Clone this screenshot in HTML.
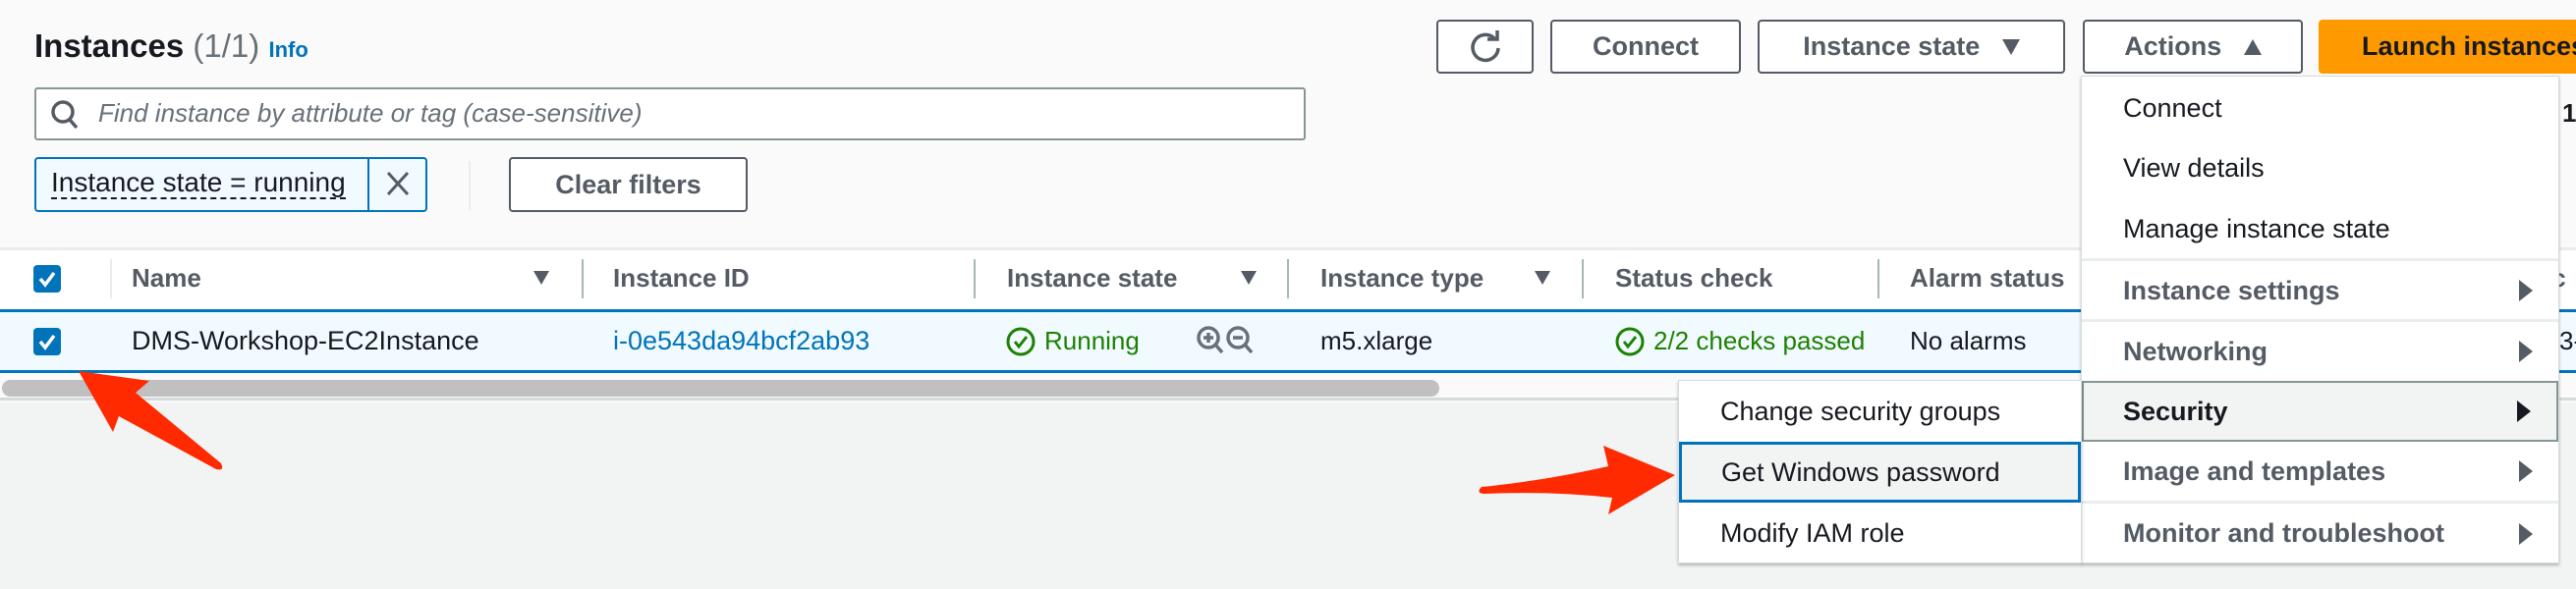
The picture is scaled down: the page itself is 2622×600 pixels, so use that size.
<!DOCTYPE html>
<html><head><meta charset="utf-8"><style>
*{box-sizing:border-box;margin:0;padding:0}
body{width:2622px;height:600px;overflow:hidden;background:#f2f3f3;font-family:"Liberation Sans",sans-serif;position:relative;color:#16191f}
.a{position:absolute}
.btn{position:absolute;top:20px;height:55px;border:2px solid #545b64;border-radius:4px;background:#fff;color:#545b64;font-weight:bold;font-size:27px;display:flex;align-items:center;justify-content:center}
.hd{position:absolute;top:268px;font-weight:bold;font-size:26px;color:#545b64}
.dv{position:absolute;top:264px;width:2px;height:40px;background:#aab7b8}
.sa{position:absolute;top:276px;width:0;height:0;border-left:8px solid transparent;border-right:8px solid transparent;border-top:14px solid #545b64}
.cell{position:absolute;top:332px;font-size:26px}
.mi{position:absolute;left:0;width:100%;font-size:27px;display:flex;align-items:center;padding-left:42px}
.mb{font-weight:bold;color:#545b64}
.tri{position:absolute;right:26px;width:0;height:0;border-top:11px solid transparent;border-bottom:11px solid transparent;border-left:14px solid #545b64}
.sep{position:absolute;left:0;width:100%;height:3px;background:#eaeded}
</style></head><body>
<div class="a" style="left:0;top:0;width:2622px;height:410px;background:#fafafa"></div>
<div class="a" style="left:35px;top:28px;font-size:33px;font-weight:bold;color:#16191f">Instances <span style="font-weight:normal;color:#687078">(1/1)</span> <span style="font-size:22px;color:#0073bb">Info</span></div>
<div class="a" style="left:35px;top:89px;width:1294px;height:54px;border:2px solid #879596;border-radius:3px;background:#fff"></div>
<svg class="a" style="left:50px;top:100px" width="32" height="34" viewBox="0 0 32 34"><circle cx="14" cy="14" r="10" fill="none" stroke="#545b64" stroke-width="3.5"/><line x1="21" y1="22" x2="28" y2="30" stroke="#545b64" stroke-width="3.5"/></svg>
<div class="a" style="left:100px;top:100px;font-size:26px;font-style:italic;color:#687078">Find instance by attribute or tag (case-sensitive)</div>
<div class="a" style="left:35px;top:160px;width:400px;height:56px;border:2px solid #0073bb;border-radius:4px;background:#f1faff"></div>
<div class="a" style="left:374px;top:162px;width:2px;height:52px;background:#0073bb"></div>
<div class="a" style="left:52px;top:170px;font-size:28px;border-bottom:2px dashed #16191f;line-height:31px">Instance state = running</div>
<svg class="a" style="left:391px;top:172px" width="28" height="30"><path d="M4 4L24 26M24 4L4 26" stroke="#545b64" stroke-width="3"/></svg>
<div class="a" style="left:477px;top:164px;width:2px;height:50px;background:#eaeded"></div>
<div class="btn" style="left:518px;top:160px;width:243px;height:56px">Clear filters</div>

<div class="btn" style="left:1462px;width:99px"><svg width="36" height="36" viewBox="0 0 36 36"><path d="M27 9A13 13 0 1 0 31 19" fill="none" stroke="#545b64" stroke-width="3.5"/><path d="M20 8H30V-1" fill="none" stroke="#545b64" stroke-width="3.5" transform="translate(0,2)"/></svg></div>
<div class="btn" style="left:1578px;width:194px">Connect</div>
<div class="btn" style="left:1789px;width:313px">Instance state&nbsp;&nbsp;&nbsp;<span style="display:inline-block;border-left:9px solid transparent;border-right:9px solid transparent;border-top:16px solid #545b64"></span></div>
<div class="btn" style="left:2120px;width:224px">Actions&nbsp;&nbsp;&nbsp;<span style="display:inline-block;border-left:9px solid transparent;border-right:9px solid transparent;border-bottom:16px solid #545b64"></span></div>
<div class="btn" style="left:2360px;width:300px;background:#ff9900;border-color:#ff9900;color:#16191f;justify-content:flex-start;padding-left:42px">Launch instances</div>
<div class="a" style="left:2608px;top:100px;font-size:26px;font-weight:bold">1</div>

<div class="a" style="left:0;top:252px;width:2622px;height:3px;background:#eaeded"></div>
<div class="a" style="left:0;top:255px;width:2622px;height:60px;background:#fff"></div>
<div class="a" style="left:34px;top:270px;width:28px;height:28px;background:#0073bb;border-radius:4px"></div>
<svg class="a" style="left:34px;top:270px" width="28" height="28"><path d="M7 14L12 20L21 8" fill="none" stroke="#fff" stroke-width="3.5"/></svg>
<div class="dv" style="left:112px;background:#eaeded"></div>
<div class="hd" style="left:134px">Name</div><div class="sa" style="left:543px"></div>
<div class="dv" style="left:592px"></div>
<div class="hd" style="left:624px">Instance ID</div>
<div class="dv" style="left:991px"></div>
<div class="hd" style="left:1025px">Instance state</div><div class="sa" style="left:1263px"></div>
<div class="dv" style="left:1310px"></div>
<div class="hd" style="left:1344px">Instance type</div><div class="sa" style="left:1562px"></div>
<div class="dv" style="left:1610px"></div>
<div class="hd" style="left:1644px">Status check</div>
<div class="dv" style="left:1911px"></div>
<div class="hd" style="left:1944px">Alarm status</div>
<div class="hd" style="left:2590px">ic</div>

<div class="a" style="left:0;top:315px;width:2622px;height:65px;background:#f1faff;border-top:3px solid #0073bb;border-bottom:3px solid #0073bb"></div>
<div class="a" style="left:34px;top:334px;width:28px;height:28px;background:#0073bb;border-radius:4px"></div>
<svg class="a" style="left:34px;top:334px" width="28" height="28"><path d="M7 14L12 20L21 8" fill="none" stroke="#fff" stroke-width="3.5"/></svg>
<div class="cell" style="left:134px;font-size:27px">DMS-Workshop-EC2Instance</div>
<div class="cell" style="left:624px;color:#0073bb;font-size:27px">i-0e543da94bcf2ab93</div>
<svg class="a" style="left:1023px;top:332px" width="32" height="32"><circle cx="16" cy="16" r="13" fill="none" stroke="#1d8102" stroke-width="3"/><path d="M10 16L14 21L22 11" fill="none" stroke="#1d8102" stroke-width="3"/></svg>
<div class="cell" style="left:1063px;color:#1d8102">Running</div>
<svg class="a" style="left:1216px;top:330px" width="66" height="40"><g fill="none" stroke="#687078" stroke-width="3.5"><circle cx="14" cy="14" r="10"/><path d="M21 21L28 29M9 14H19M14 9V19"/><circle cx="44" cy="14" r="10"/><path d="M51 21L58 29M39 14H49"/></g></svg>
<div class="cell" style="left:1344px">m5.xlarge</div>
<svg class="a" style="left:1643px;top:332px" width="32" height="32"><circle cx="16" cy="16" r="13" fill="none" stroke="#1d8102" stroke-width="3"/><path d="M10 16L14 21L22 11" fill="none" stroke="#1d8102" stroke-width="3"/></svg>
<div class="cell" style="left:1683px;color:#1d8102">2/2 checks passed</div>
<div class="cell" style="left:1944px">No alarms</div>
<div class="cell" style="left:2605px">3-</div>

<div class="a" style="left:0;top:380px;width:2622px;height:28px;background:#fafafa;border-bottom:3px solid #d5dbdb"></div>
<div class="a" style="left:2px;top:387px;width:1463px;height:17px;background:#c0c0c0;border-radius:9px"></div>

<div class="a" style="left:2118px;top:77px;width:487px;height:497px;background:#fff;border:1px solid #d5dbdb;box-shadow:0 2px 3px rgba(0,0,0,.25)">
 <div class="mi" style="top:0;height:64px">Connect</div>
 <div class="mi" style="top:62px;height:62px">View details</div>
 <div class="mi" style="top:124px;height:62px">Manage instance state</div>
 <div class="sep" style="top:185px"></div>
 <div class="mi mb" style="top:188px;height:60px">Instance settings<span class="tri"></span></div>
 <div class="sep" style="top:247px"></div>
 <div class="mi mb" style="top:250px;height:60px">Networking<span class="tri"></span></div>
 <div class="mi mb" style="top:310px;height:62px;background:#f2f3f3;border:2px solid #879596;color:#16191f;padding-left:40px">Security<span class="tri" style="border-left-color:#16191f"></span></div>
 <div class="mi mb" style="top:372px;height:60px">Image and templates<span class="tri"></span></div>
 <div class="sep" style="top:432px"></div>
 <div class="mi mb" style="top:435px;height:61px">Monitor and troubleshoot<span class="tri"></span></div>
</div>
<div class="a" style="left:1708px;top:387px;width:411px;height:187px;background:#fff;border:1px solid #d5dbdb;box-shadow:0 2px 3px rgba(0,0,0,.25)">
 <div class="mi" style="top:0;height:62px">Change security groups</div>
 <div class="mi" style="top:62px;height:62px;background:#f2f3f3;border:3px solid #0073bb;padding-left:40px">Get Windows password</div>
 <div class="mi" style="top:124px;height:62px">Modify IAM role</div>
</div>

<svg class="a" style="left:0;top:0" width="2622" height="600">
<path d="M80 378L152 388L138 400L225 472Q229 480 220 478L121 424L115 440Z" fill="#ff2a00"/>
<path d="M1705 484L1632 454L1637 475Q1570 490 1508 496Q1502 502 1510 503Q1580 500 1641 507L1637 524Z" fill="#ff2a00"/>
</svg>
</body></html>
